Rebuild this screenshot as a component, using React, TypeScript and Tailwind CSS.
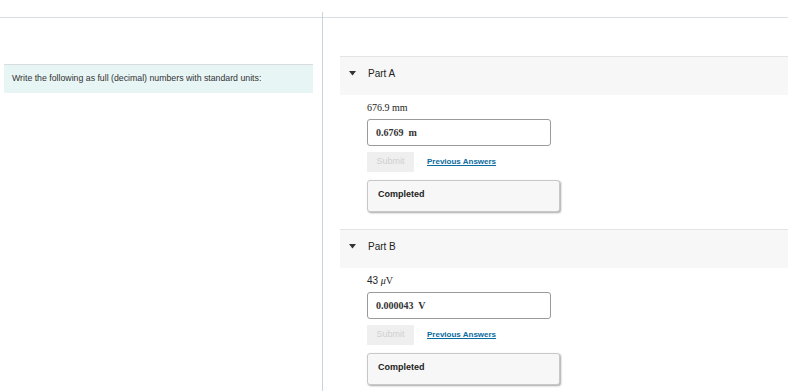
import { ReactNode } from 'react';

function Caret() {
  return (
    <svg width="7" height="5" viewBox="0 0 7 5" className="shrink-0">
      <path d="M0 0 H7 L3.5 4.5 Z" fill="#333" />
    </svg>
  );
}

interface PartProps {
  title: string;
  prompt: ReactNode;
  answer: ReactNode;
}

function Part({ title, prompt, answer }: PartProps) {
  return (
    <section>
      {/* Header */}
      <div className="h-[39px] flex items-center gap-[12px] pl-[9px] pb-[6px] bg-[#f7f7f7] border-t border-[#e4e4e4]">
        <Caret />
        <span className="text-[10px] text-[#222]">{title}</span>
      </div>

      <div className="pl-[27px] pt-[6px]">
        <div className="h-[12px] flex items-center text-[10px] text-[#222] font-['Liberation_Serif',serif]">{prompt}</div>

        {/* Answer input */}
        <div className="mt-[6px] w-[184px] h-[27px] flex items-center px-[8px] border border-[#9a9a9a] rounded-[3px] bg-white text-[10px] font-bold text-[#333] font-['Liberation_Serif',serif] whitespace-pre">
          {answer}
        </div>

        <div className="mt-[6px] flex items-center gap-[13px]">
          <button type="button" disabled className="w-[47px] h-[20px] bg-[#efefef] text-[9px] text-[#cfcfcf]">
            Submit
          </button>
          <a className="text-[8px] font-bold text-[#0b6aa0] underline">Previous Answers</a>
        </div>

        {/* Status */}
        <div className="mt-[8px] w-[193px] h-[32px] flex items-center px-[10px] pb-[2px] bg-[#f7f7f7] border border-[#c8c8c8] rounded-[3px] shadow-[1px_1px_2px_rgba(0,0,0,0.35)] text-[9px] font-bold text-[#222]">
          Completed
        </div>
      </div>
    </section>
  );
}

export default function App() {
  return (
    <div className="w-[788px] h-[391px] overflow-hidden bg-white pt-[12px] font-['Liberation_Sans',Arial,sans-serif]">
      <div className="flex h-full">
        {/* Left column */}
        <div className="w-[323px] shrink-0 border-r border-[#c8d4df]">
          <div className="h-[6px] border-b border-[#d9dee3]" />
          <div className="mt-[46px] ml-[4px] w-[309px] h-[29px] flex items-center pl-[8px] bg-[#e7f5f5] border-t border-[#d8dcdc] text-[8.75px] text-[#333]">
            Write the following as full (decimal) numbers with standard units:
          </div>
        </div>

        {/* Right column */}
        <div className="flex-1">
          <div className="h-[6px] border-b border-[#d9dee3]" />
          <div className="pl-[17px] pt-[38px] flex flex-col gap-[17px]">
            <Part title="Part A" prompt="676.9 mm" answer="0.6769  m" />
            <Part
              title="Part B"
              prompt={
                <span>
                  <span className="font-['Liberation_Sans',Arial,sans-serif]">43</span> <i>μ</i>V
                </span>
              }
              answer="0.000043  V"
            />
          </div>
        </div>
      </div>
    </div>
  );
}
